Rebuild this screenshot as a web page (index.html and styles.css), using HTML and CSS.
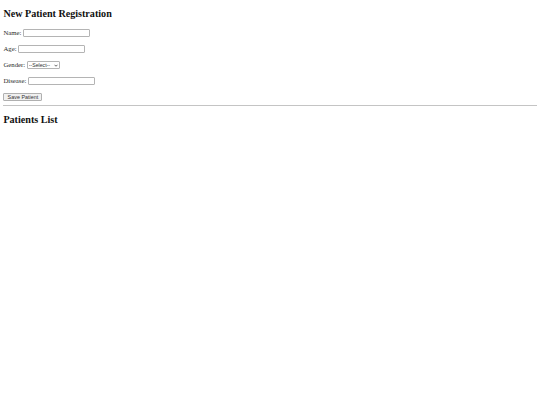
FILE: index.html
```html
<!DOCTYPE html>
<html>
<head>
<meta charset="utf-8">
<title>Patient Registration</title>
<link rel="stylesheet" href="styles.css">
</head>
<body>
<h2 class="title title-first">New Patient Registration</h2>
<form class="form">
  <div class="row"><label class="label">Name:</label><input type="text" class="field"></div>
  <div class="row"><label class="label">Age:</label><input type="text" class="field"></div>
  <div class="row"><label class="label">Gender:</label>
    <span class="select-wrap">
      <select class="choice">
        <option>--Select--</option>
        <option>Male</option>
        <option>Female</option>
      </select>
      <svg class="chev" viewBox="0 0 8 5" width="4" height="3"><path d="M1 1 L4 4 L7 1" fill="none" stroke="#333" stroke-width="1.5"/></svg>
    </span>
  </div>
  <div class="row"><label class="label">Disease:</label><input type="text" class="field"></div>
  <div class="row"><button type="button" class="save">Save Patient</button></div>
</form>
<hr class="rule">
<h2 class="title title-second">Patients List</h2>
</body>
</html>
```
FILE: styles.css
```css
html {
  background: #ffffff;
}
body {
  margin: 3.4px;
  font-family: "Liberation Serif", "Times New Roman", serif;
  font-size: 6.75px;
  color: #2a2a2a;
}
.title {
  font-size: 10.125px;
  font-weight: bold;
  line-height: 11.6px;
  margin: 0;
  color: #111;
}
.title-first {
  margin-top: 4.6px;
  margin-bottom: 9.4px;
}
.title-second {
  margin-top: 8px;
}
.form {
  display: flex;
  flex-direction: column;
  gap: 8px;
  margin: 0;
}
.row {
  display: flex;
  align-items: center;
  gap: 1.6px;
  height: 8px;
}
.label {
  line-height: 8px;
}
.field {
  appearance: none;
  box-sizing: border-box;
  width: 67px;
  height: 8px;
  margin: 0;
  padding: 0;
  border: 1px solid #b4b4b4;
  border-radius: 1px;
  background: #fff;
}
.select-wrap {
  position: relative;
  display: inline-block;
  height: 8px;
}
.choice {
  appearance: none;
  box-sizing: border-box;
  width: 33px;
  height: 8px;
  margin: 0;
  padding: 0 0 0 1px;
  border: 1px solid #b4b4b4;
  border-radius: 1px;
  background: #fff;
  font-family: "Liberation Sans", Arial, sans-serif;
  font-size: 5.2px;
  line-height: 6px;
  color: #333;
  display: block;
}
.chev {
  position: absolute;
  right: 2px;
  top: 2.6px;
}
.save {
  box-sizing: border-box;
  width: 39px;
  height: 8px;
  margin: 0;
  padding: 0;
  border: 1px solid #b0b0b0;
  border-radius: 1px;
  background: #f0f0f0;
  font-family: "Liberation Sans", Arial, sans-serif;
  font-size: 5.4px;
  line-height: 6px;
  color: #333;
}
.rule {
  margin: 4px 0 0 0;
  border: 0;
  border-top: 1px solid #c4c4c4;
  height: 0;
}
```
